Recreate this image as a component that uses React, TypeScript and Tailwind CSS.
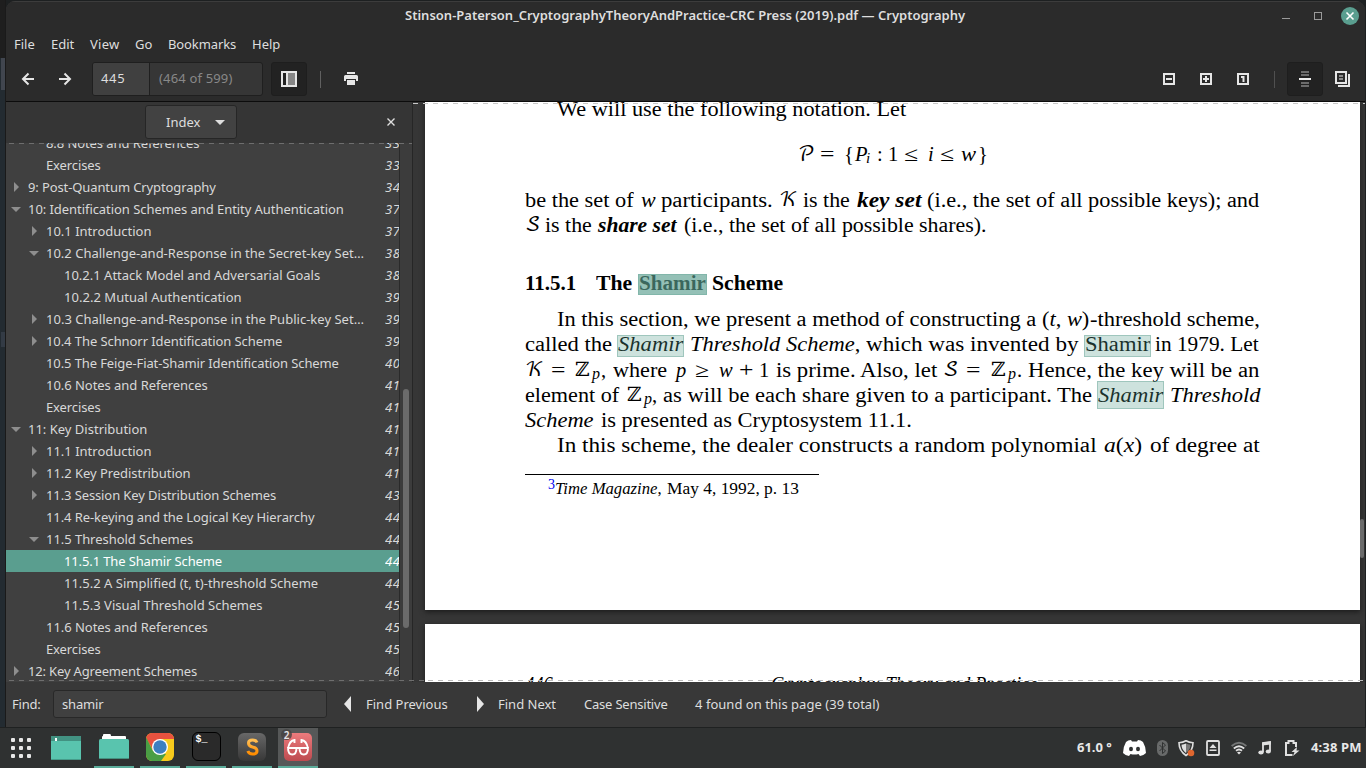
import { useLayoutEffect, useRef, useState, type ReactNode } from "react";

/* Text set to the width of its own box, by tracking (UI) or by horizontal scale (document). */
function Fit({ c = "", s = false, children }: { c?: string; s?: boolean; children: ReactNode }) {
  const box = useRef<HTMLSpanElement>(null);
  const inner = useRef<HTMLSpanElement>(null);
  const [style, setStyle] = useState<Record<string, string>>({});
  useLayoutEffect(() => {
    if (!box.current || !inner.current) return;
    const target = box.current.clientWidth;
    const natural = inner.current.offsetWidth;
    const n = (inner.current.textContent || "").length;
    if (!natural || !target) return;
    setStyle(s ? { transform: `scaleX(${target / natural})` } : n > 1 ? { letterSpacing: `${(target - natural) / n}px` } : {});
  }, [s]);
  return (
    <span ref={box} className={`inline-block shrink-0 whitespace-pre ${c}`}>
      <span ref={inner} className="inline-block origin-left" style={style}>{children}</span>
    </span>
  );
}

const T = ({ c = "", children }: { c?: string; children: ReactNode }) => <Fit s c={c}>{children}</Fit>;

const Line = ({ c = "", children }: { c?: string; children: ReactNode }) => (
  <div className={`flex h-[25px] shrink-0 text-[20.5px] leading-[25px] ${c}`}>{children}</div>
);

const M = ({ c = "", children }: { c?: string; children: ReactNode }) => (
  <span className={`inline-block shrink-0 whitespace-pre ${c}`}>{children}</span>
);

const Cal = ({ c = "", children }: { c?: string; children: ReactNode }) => (
  <span className={`inline-block shrink-0 font-['DejaVu_Math_TeX_Gyre','Liberation_Serif',serif] text-[20px] ${c}`}>{children}</span>
);

function Hit({ c = "", o = "", children }: { c?: string; o?: string; children: ReactNode }) {
  return (
    <span className={`relative inline-block shrink-0 ${c}`}>
      <T c="w-full">{children}</T>
      <span className={`absolute -left-px -right-px border ${o}`} />
    </span>
  );
}
const soft = "border-[#5a9e8f]/40 bg-[#5a9e8f]/30";

const rows: [number, string, string, string, string][] = [
  [1, "", "8.8 Notes and References", "w-[153px]", "33"],
  [1, "", "Exercises", "w-[55px]", "33"],
  [0, "c", "9: Post-Quantum Cryptography", "w-[188px]", "34"],
  [0, "o", "10: Identification Schemes and Entity Authentication", "w-[316px]", "37"],
  [1, "c", "10.1 Introduction", "w-[106px]", "37"],
  [1, "o", "10.2 Challenge-and-Response in the Secret-key Set…", "w-[318px]", "38"],
  [2, "", "10.2.1 Attack Model and Adversarial Goals", "w-[256px]", "38"],
  [2, "", "10.2.2 Mutual Authentication", "w-[178px]", "39"],
  [1, "c", "10.3 Challenge-and-Response in the Public-key Set…", "w-[318px]", "39"],
  [1, "c", "10.4 The Schnorr Identification Scheme", "w-[236px]", "39"],
  [1, "", "10.5 The Feige-Fiat-Shamir Identification Scheme", "w-[293px]", "40"],
  [1, "", "10.6 Notes and References", "w-[162px]", "41"],
  [1, "", "Exercises", "w-[55px]", "41"],
  [0, "o", "11: Key Distribution", "w-[119px]", "41"],
  [1, "c", "11.1 Introduction", "w-[106px]", "41"],
  [1, "c", "11.2 Key Predistribution", "w-[145px]", "41"],
  [1, "c", "11.3 Session Key Distribution Schemes", "w-[230px]", "43"],
  [1, "", "11.4 Re-keying and the Logical Key Hierarchy", "w-[268px]", "44"],
  [1, "o", "11.5 Threshold Schemes", "w-[147px]", "44"],
  [2, "", "11.5.1 The Shamir Scheme", "w-[158px]", "44"],
  [2, "", "11.5.2 A Simplified (t, t)-threshold Scheme", "w-[254px]", "44"],
  [2, "", "11.5.3 Visual Threshold Schemes", "w-[199px]", "45"],
  [1, "", "11.6 Notes and References", "w-[162px]", "45"],
  [1, "", "Exercises", "w-[55px]", "45"],
  [0, "c", "12: Key Agreement Schemes", "w-[169px]", "46"],
];
const pads = ["pl-[4px]", "pl-[22px]", "pl-[40px]"];

function Row({ row }: { row: (typeof rows)[number] }) {
  const [level, arrow, text, width, page] = row;
  const sel = text.startsWith("11.5.1");
  return (
    <div className={`flex h-[22px] shrink-0 items-center leading-[22px] ${pads[level]} ${sel ? "bg-[#5a9e8f] text-white" : "text-[#d8d8d8]"}`}>
      <svg className="mr-[6px] h-3 w-3 shrink-0 fill-[#8e8e8e]" viewBox="0 0 12 12">
        {arrow === "c" && <path d="M4 1l5 5-5 5z" />}
        {arrow === "o" && <path d="M1 4h10L6 9z" />}
      </svg>
      <Fit c={width}>{text}</Fit>
      <span className="ml-auto w-[14px] shrink-0 overflow-hidden italic">
        <Fit c="w-[15px]">{page}</Fit>
      </span>
    </div>
  );
}

const Dash = ({ c }: { c: string }) => (
  <div className={`pointer-events-none absolute h-px ${c}`} />
);

function Header() {
  return (
    <div className="flex h-[100px] shrink-0 flex-col border-t border-[#3c3c3c] bg-[#2b2b2b]">
      <div className="flex h-7 items-center">
        <Fit c="ml-[399px] w-[560px] font-semibold text-[#dedede]">Stinson-Paterson_CryptographyTheoryAndPractice-CRC Press (2019).pdf — Cryptography</Fit>
        <svg className="ml-[314px] h-5 w-20" viewBox="1279 5 80 20">
          <path d="M1282 17.500h8" stroke="#9a9a9a" />
          <rect x="1314.500" y="11.500" width="7" height="7" fill="none" stroke="#9a9a9a" />
          <circle cx="1350" cy="15" r="9" fill="#5a9e8f" />
          <path d="M1346.500 11.500l7 7m0-7l-7 7" stroke="#fff" strokeWidth="1.600" />
        </svg>
      </div>
      <div className="flex h-[28px] items-center pl-2 leading-[28px] text-[#dedede]">
        <Fit c="mr-4 w-[21px]">File</Fit>
        <Fit c="mr-4 w-[23px]">Edit</Fit>
        <Fit c="mr-4 w-[29px]">View</Fit>
        <Fit c="mr-4 w-[17px]">Go</Fit>
        <Fit c="mr-4 w-[68px]">Bookmarks</Fit>
        <Fit c="w-[28px]">Help</Fit>
      </div>
      <div className="mt-[4px] flex h-[34px] items-center">
        <svg className="ml-[15px] h-4 w-14" viewBox="0 0 56 16" fill="none" stroke="#e6e6e6" strokeWidth="2">
          <path d="M13 8H2.500M7.500 2.500L2 8 7.500 13.500M38 8h10.500M43.500 2.500L49 8 43.500 13.500" />
        </svg>
        <div className="ml-[15px] flex h-[34px] w-[171px] items-center overflow-hidden rounded-[3px] border border-[#1f1f1f] bg-[#363636] leading-[30px]">
          <span className="h-full w-[57px] border-r border-[#1f1f1f] bg-[#404040] pl-2 text-[#dedede]"><Fit c="w-[24px]">445</Fit></span>
          <span className="h-full pl-[9px] text-[#888]"><Fit c="w-[74px]">(464 of 599)</Fit></span>
        </div>
        <div className="ml-2 flex h-[34px] w-9 items-center justify-center rounded-[3px] border border-[#1e1e1e] bg-[#222]">
          <svg className="h-4 w-4" viewBox="0 0 16 16">
            <path fill="#e6e6e6" fillRule="evenodd" d="M0 0h16v16H0zM2 2v12h3V2zM6 2v12h8V2z" />
            <rect x="7" y="2" width="7" height="12" fill="#868686" />
            <rect x="5" y="2" width="2" height="12" fill="#e6e6e6" />
          </svg>
        </div>
        <div className="ml-[13px] h-[17px] w-px bg-[#606060]" />
        <svg className="ml-[23px] h-[14px] w-[14px]" viewBox="0 0 14 14" fill="#e6e6e6">
          <path d="M3 0h8v2H3zM1.500 3h11Q14 3 14 4.500V9h-2V7H2v2H0V4.500Q0 3 1.500 3zM3 8h8v5H3z" />
        </svg>
        <svg className="ml-[805px] h-3 w-[87px]" viewBox="0 0 87 12" fill="none" stroke="#e6e6e6" strokeWidth="2">
          <path d="M1 1h10v10H1zM3 6h6M38 1h10v10H38zM40 6h6M43 3v6M75 1h10v10H75zM78 4h2.500M80.500 3v6" />
        </svg>
        <div className="ml-[24px] h-[17px] w-px bg-[#505050]" />
        <div className="ml-3 flex h-[34px] w-9 items-center justify-center rounded-[3px] border border-[#1e1e1e] bg-[#222]">
          <svg className="h-4 w-3" viewBox="0 0 12 16">
            <path d="M2 1h8M2 4h8M2 12h8M2 15h8" stroke="#6c6c6c" strokeWidth="2" />
            <path d="M0 8h12" stroke="#eee" strokeWidth="2" />
          </svg>
        </div>
        <svg className="ml-3 h-4 w-4" viewBox="0 0 16 16" fill="none">
          <path d="M1 1h10v11H1zM14 3v12H3" stroke="#e6e6e6" strokeWidth="2" />
          <path d="M4 5h4M4 8h4" stroke="#8a8a8a" strokeWidth="1.800" />
        </svg>
      </div>
    </div>
  );
}

function Sidebar() {
  return (
    <div className="flex w-[407px] shrink-0 flex-col border-r border-[#262626]">
      <div className="flex h-[41px] shrink-0 items-center bg-[#353535]">
        <div className="ml-[139px] -mt-px flex h-[34px] w-[92px] items-center rounded-[3px] border border-[#262626] bg-[#424242] leading-8 text-[#dedede]">
          <Fit c="ml-5 w-[34px]">Index</Fit>
          <svg className="ml-[15px] h-[5px] w-[10px] fill-[#dedede]" viewBox="0 0 10 5"><path d="M0 0h10L5 5z" /></svg>
        </div>
        <svg className="ml-[150px] -mt-px h-2 w-2" viewBox="0 0 8 8"><path d="M.5.5l7 7m0-7l-7 7" stroke="#dedede" strokeWidth="1.400" /></svg>
      </div>
      <div className="relative flex min-h-0 flex-1 overflow-hidden bg-[#404040]">
        <div className="-mt-[11px] flex w-[393px] shrink-0 flex-col">
          {rows.map((r, i) => <Row key={i} row={r} />)}
        </div>
        <div className="flex w-[13px] flex-col border-l border-[#2a2a2a] bg-[#3c3c3c] pl-[3px] pt-[246px]">
          <div className="h-[239px] w-[6px] rounded-full bg-[#6b6b6b]" />
        </div>
        <Dash c="inset-x-0 top-0 bg-[repeating-linear-gradient(90deg,transparent_0_3px,#6e6e6e_3px_8px,transparent_8px_10px)]" />
      </div>
    </div>
  );
}

function Pages() {
  return (
    <div className="flex min-w-0 flex-1 flex-col overflow-hidden bg-[#363636] pl-3 font-['Liberation_Serif',serif] text-black">
      <div className="h-[508px] w-[935px] shrink-0 overflow-hidden bg-white pl-[100px] shadow-[0_2px_5px_#1c1c1c]">
        <Line c="-mt-[5px] pl-8"><T c="w-[349px]">We will use the following notation. Let</T></Line>
        <Line c="mt-[20px] pl-[273px]">
          <Cal c="w-[22px]">𝒫</Cal>
          <M c="w-[24px] scale-x-125 origin-left">=</M>
          <M c="w-[11px]">{"{"}</M>
          <M c="w-[11px] italic">P</M>
          <M c="w-[11px] italic text-[15px] pt-1">i</M>
          <M c="w-[11px]">:</M>
          <M c="w-[16px]">1</M>
          <M c="w-[24px] scale-x-125 origin-left">≤</M>
          <M c="w-[12px] italic">i</M>
          <M c="w-[21px] scale-x-125 origin-left">≤</M>
          <M c="w-[17px] italic scale-x-110 origin-left">w</M>
          <M>{"}"}</M>
        </Line>
        <Line c="mt-[21px]">
          <T c="w-[109px] mr-[7px]">be the set of</T>
          <T c="w-[15px] mr-[5px] italic">w</T>
          <T c="w-[112px] mr-[6px]">participants.</T>
          <Cal c="w-[24px]">𝒦</Cal>
          <T c="w-[47px] mr-[7px]">is the</T>
          <T c="w-[64px] mr-[6px] font-bold italic">key set</T>
          <T c="w-[332px]">(i.e., the set of all possible keys); and</T>
        </Line>
        <Line>
          <Cal c="w-[20px]">𝒮</Cal>
          <T c="w-[47px] mr-[6px]">is the</T>
          <T c="w-[79px] mr-[7px] font-bold italic">share set</T>
          <T c="w-[303px]">(i.e., the set of all possible shares).</T>
        </Line>
        <Line c="mt-[33px] font-bold">
          <T c="w-[51px] mr-[20px]">11.5.1</T>
          <T c="w-[36px] mr-[7px]">The</T>
          <Hit c="w-[67px] mr-[6px]" o="top-[3px] h-[21px] border-[#5a9e8f]/30 bg-[#5a9e8f]/65">Shamir</Hit>
          <T c="w-[71px]">Scheme</T>
        </Line>
        <Line c="mt-[11px] pl-8">
          <T c="w-[479px] mr-[6px]">In this section, we present a method of constructing a</T>
          <T c="w-[47px] mr-px">(<i>t</i>, <i>w</i>)</T>
          <T c="w-[170px]">-threshold scheme,</T>
        </Line>
        <Line>
          <T c="w-[87px] mr-[6px]">called the</T>
          <Hit c="w-[65px] mr-[7px] italic" o={`top-[3px] h-[22px] ${soft}`}>Shamir</Hit>
          <T c="w-[170px] mr-[6px]"><i>Threshold Scheme</i>,</T>
          <T c="w-[212px] mr-[7px]">which was invented by</T>
          <Hit c="w-[65px] mr-[5px]" o={`top-[3px] h-[22px] ${soft}`}>Shamir</Hit>
          <T c="w-[104px]">in 1979. Let</T>
        </Line>
        <Line c="mt-px">
          <Cal c="w-[26px]">𝒦</Cal>
          <M c="w-[23px] scale-x-125 origin-left">=</M>
          <Cal c="w-[18px]">ℤ</Cal>
          <M c="w-[9px] italic text-[16px] pt-[3px]">p</M>
          <M c="w-[12px]">,</M>
          <T c="w-[54px] mr-[9px]">where</T>
          <M c="w-[19px] italic">p</M>
          <M c="w-[24px] scale-x-125 origin-left">≥</M>
          <M c="w-[20px] italic">w</M>
          <M c="w-[20px] scale-x-125 origin-left">+</M>
          <M c="w-[17px]">1</M>
          <T c="w-[161px] mr-[6px]">is prime. Also, let</T>
          <Cal c="w-[23px]">𝒮</Cal>
          <M c="w-[24px] scale-x-125 origin-left">=</M>
          <Cal c="w-[18px]">ℤ</Cal>
          <M c="w-[9px] italic text-[16px] pt-[3px]">p</M>
          <M c="w-[11px]">.</M>
          <T c="w-[231px]">Hence, the key will be an</T>
        </Line>
        <Line>
          <T c="w-[94px] mr-[7px]">element of</T>
          <Cal c="w-[18px]">ℤ</Cal>
          <M c="w-[8px] italic text-[16px] pt-[3px]">p</M>
          <M c="w-[11px]">,</M>
          <T c="w-[429px] mr-[6px]">as will be each share given to a participant. The</T>
          <Hit c="w-[65px] mr-[7px] italic" o={`-top-[2px] h-[28px] ${soft}`}>Shamir</Hit>
          <T c="w-[90px] italic">Threshold</T>
        </Line>
        <Line>
          <T c="w-[69px] mr-[7px] italic">Scheme</T>
          <T c="w-[311px]">is presented as Cryptosystem 11.1.</T>
        </Line>
        <Line c="pl-8">
          <T c="w-[540px] mr-[7px]">In this scheme, the dealer constructs a random polynomial</T>
          <T c="w-[38px] mr-[8px]"><i>a</i>(<i>x</i>)</T>
          <T c="w-[110px]">of degree at</T>
        </Line>
        <div className="mt-[16px] h-px w-[294px] bg-black" />
        <div className="mt-1 flex h-5 pl-[23px] text-[17px] leading-5">
          <span className="w-[7px] -mt-[4px] text-[14px] text-[#0000ee]">3</span>
          <T c="w-[107px] mr-[5px]"><i>Time Magazine</i>,</T>
          <T c="w-[132px]">May 4, 1992, p. 13</T>
        </div>
      </div>
      <div className="mt-[14px] flex h-[200px] w-[935px] shrink-0 bg-white pl-[100px] pt-[48px] text-[20.5px] italic leading-[25px] shadow-[0_2px_5px_#1c1c1c]">
        <T c="w-[28px] mr-[218px]">446</T>
        <T c="w-[267px]">Cryptography: Theory and Practice</T>
      </div>
    </div>
  );
}

function FindBar() {
  return (
    <div className="flex h-[45px] shrink-0 items-center bg-[#383838] pb-px pl-[6px] leading-[26px] text-[#dedede]">
      <Fit c="w-[29px]">Find:</Fit>
      <div className="ml-3 flex h-[28px] w-[274px] items-center rounded-[3px] border border-[#282828] bg-[#404040] pl-2">
        <Fit c="w-[41px]">shamir</Fit>
      </div>
      <svg className="ml-[17px] h-4 w-[7px] fill-[#e6e6e6]" viewBox="0 0 7 16"><path d="M7 0v16L0 8z" /></svg>
      <Fit c="ml-[15px] w-[82px]">Find Previous</Fit>
      <svg className="ml-[29px] h-4 w-[7px] fill-[#e6e6e6]" viewBox="0 0 7 16"><path d="M0 0l7 8-7 8z" /></svg>
      <Fit c="ml-[14px] w-[58px]">Find Next</Fit>
      <Fit c="ml-[28px] w-[84px]">Case Sensitive</Fit>
      <Fit c="ml-[27px] w-[185px]">4 found on this page (39 total)</Fit>
    </div>
  );
}

function Slot({ active = false, children }: { active?: boolean; children: ReactNode }) {
  return (
    <div className={`mr-[6px] flex h-10 w-10 shrink-0 flex-col items-center border-b-2 border-[#5bac9a] pt-1 ${active ? "relative bg-[#565858]" : ""}`}>
      {children}
    </div>
  );
}

function Taskbar() {
  return (
    <div className="flex h-10 shrink-0 items-center bg-[#2f3131] text-[#e8e8e8]">
      <svg className="ml-[11px] h-5 w-5 shrink-0" viewBox="0 0 20 20" fill="#e8e8e8">
        {[0, 8, 16].map((x) => [0, 8, 16].map((y) => <rect key={`${x}-${y}`} x={x} y={y} width="4" height="4" rx="1" />))}
      </svg>
      <svg className="ml-5 h-6 w-[30px] shrink-0" viewBox="0 0 30 24">
        <rect width="30" height="24" fill="#59c4ae" /><rect width="30" height="5" fill="#429282" /><rect x="4" y="2" width="2" height="3" fill="#fff" />
        <path d="M0 23.500h30" stroke="#469c8a" />
      </svg>
      <div className="ml-[13px] flex">
        <Slot>
          <svg className="mt-[2px] h-[26px] w-[30px]" viewBox="0 0 30 26">
            <path d="M3 6V3q0-1 1-1V1q0-1 1-1h6q1 0 1 2h14q1 0 1 1v3z" fill="#fff" />
            <rect y="5" width="30" height="20" rx="1.500" fill="#59c4ae" /><path d="M1 24.500h28" stroke="#45907f" />
          </svg>
        </Slot>
        <Slot>
          <svg className="mt-px h-7 w-7" viewBox="0 0 28 28">
            <defs><clipPath id="ch"><rect width="28" height="28" rx="6" /></clipPath></defs>
            <g clipPath="url(#ch)">
              <rect width="28" height="28" fill="#f7ca1c" />
              <path d="M0 0h28v6H14L7 17 0 5z" fill="#e8523f" />
              <path d="M0 4l7 14 13 3-5 7H0z" fill="#4a9e44" />
            </g>
            <circle cx="14" cy="14" r="8" fill="#fff" /><circle cx="14" cy="14" r="6.700" fill="#3c7fc0" />
          </svg>
        </Slot>
        <Slot>
          <div className="h-[29px] w-[29px] rounded-[6px] border border-black bg-[#2a2a2a] pl-[3px] pt-[2px] font-['Liberation_Mono',monospace] text-[10px] font-bold leading-[10px] text-white">$_</div>
        </Slot>
        <Slot>
          <div className="mt-px flex h-7 w-7 items-center justify-center rounded-[6px] bg-gradient-to-b from-[#686868] to-[#383838]">
            <svg className="h-[18px] w-[13px]" viewBox="0 0 13 18" fill="none">
              <defs><linearGradient id="sg" x2="0" y2="1"><stop stopColor="#ffbf55" /><stop offset="1" stopColor="#ff8c00" /></linearGradient></defs>
              <path d="M11 4.500Q10 2 6.500 2 2.500 2 2.500 5T6.500 9q4.500 1 4.500 4t-4.500 3Q3 16 1.800 13" stroke="url(#sg)" strokeWidth="3" />
            </svg>
          </div>
        </Slot>
        <Slot active>
          <svg className="mt-px h-7 w-7" viewBox="0 0 28 28">
            <defs><linearGradient id="rg" x2="0" y2="1"><stop stopColor="#ec7b7d" /><stop offset="1" stopColor="#bd4b50" /></linearGradient></defs>
            <rect width="28" height="28" rx="5" fill="url(#rg)" />
            <g fill="none" stroke="#fff" strokeWidth="1.900">
              <path d="M4 15h8.500q0 6.500-4.200 6.500T4 15zM15.500 15H24q0 6.500-4.200 6.500T15.500 15zM12 16q2-2 4 0M4 15.500Q5.500 7.500 10.500 7v3M24 15.500Q22.500 7.500 17.500 7v3" />
            </g>
          </svg>
          <span className="absolute left-[3px] top-px flex h-[11px] w-[11px] items-center justify-center rounded-full bg-[#444]/80 text-[10px] font-semibold leading-none">2</span>
        </Slot>
      </div>
      <Fit c="ml-[753px] w-[35px] font-bold">61.0 °</Fit>
      <svg className="ml-[11px] h-[18px] w-[23px] shrink-0" viewBox="0 0 23 18">
        <path fill="#fff" d="M8 1Q5 1 3 3 0 8 0 14q3 3 6 3l1.500-2q4 1 8 0L17 17q3 0 6-3 0-6-3-11-2-2-5-2l-1 1.500H9z" />
        <ellipse cx="8" cy="10" rx="2" ry="2.200" fill="#303232" /><ellipse cx="15" cy="10" rx="2" ry="2.200" fill="#303232" />
      </svg>
      <svg className="ml-[11px] h-4 w-[11px] shrink-0" viewBox="0 0 11 16">
        <rect width="11" height="16" rx="5.500" fill="#686a6a" />
        <path d="M2.500 5l6 6-3 2.500v-11l3 2.500-6 6" fill="none" stroke="#303232" />
      </svg>
      <svg className="ml-[10px] h-[17px] w-[17px] shrink-0" viewBox="0 0 17 17">
        <path d="M8 .8Q11 2.500 15 2.800 15 11 8 15.500 1 11 1 2.800 5 2.500 8 .8z" fill="none" stroke="#dedede" strokeWidth="1.600" />
        <path d="M8 3.500v9.500Q3.500 10 3.500 4.800 6 4.600 8 3.500z" fill="#dedede" />
        <path d="M8 3.500v9.500Q12.500 10 12.500 4.800 10 4.600 8 3.500z" fill="#777" />
        <circle cx="13" cy="13" r="3.300" fill="#e0672f" />
      </svg>
      <svg className="ml-[11px] h-4 w-[14px] shrink-0" viewBox="0 0 14 16">
        <rect x="1" y="1" width="12" height="14" rx="1" fill="none" stroke="#e0e0e0" strokeWidth="1.800" />
        <path d="M7 4l3.500 4h-7zM3.500 9.500h7V11h-7z" fill="#e0e0e0" />
      </svg>
      <svg className="ml-[11px] h-[14px] w-4 shrink-0" viewBox="0 0 16 14" fill="none" strokeWidth="1.800">
        <path d="M.6 5Q8-1.500 15.400 5" stroke="#747676" />
        <path d="M2.800 7.500q5.200-4.500 10.400 0M5 9.800q3-2.600 6 0" stroke="#e0e0e0" />
        <path d="M8 13.500l-2-2q2-1.500 4 0z" fill="#e0e0e0" />
      </svg>
      <svg className="ml-[11px] h-[14px] w-[14px] shrink-0" viewBox="0 0 14 14">
        <path d="M5 11V2l7-1v9" fill="none" stroke="#e0e0e0" strokeWidth="1.800" />
        <path d="M4.200 1.500L12.900.5v3l-8.700 1z" fill="#e0e0e0" />
        <ellipse cx="3" cy="11.500" rx="2.700" ry="2" fill="#e0e0e0" /><ellipse cx="10.300" cy="10.500" rx="2.600" ry="2" fill="#e0e0e0" />
      </svg>
      <svg className="ml-[13px] h-4 w-[15px] shrink-0" viewBox="0 0 15 16">
        <path d="M7.500 15H1V3h2.500V1h5v2H11v4" fill="none" stroke="#e0e0e0" strokeWidth="2" />
        <path d="M12 7L6.500 12h3L8 16l6.500-5.500H11.500z" fill="#e0e0e0" />
      </svg>
      <Fit c="ml-[11px] w-[51px] font-bold">4:38 PM</Fit>
    </div>
  );
}

export default function App() {
  return (
    <div className="flex h-[768px] w-[1366px] flex-col overflow-hidden bg-[#1d2021] font-['Noto_Sans','Open_Sans',sans-serif] text-[13px]">
      <div className="flex h-[727px] shrink-0">
        <div className="flex w-[6px] shrink-0 flex-col border-r border-[#1a1a1a] bg-[#232b31] pl-px">
          <div className="-ml-px h-[58px] bg-[#1e1e1e]" />
          <div className="h-8 bg-[#41464f]" />
          <div className="mt-[242px] h-[15px] bg-[#333b45]" />
        </div>
        <div className="relative mt-px flex w-[1359px] flex-col overflow-hidden rounded-t-[9px] bg-[#363636]">
          <Header />
          <div className="h-px shrink-0 bg-[#0c0c0c]" />
          <div className="flex h-[580px] shrink-0">
            <Sidebar />
            <Pages />
            <div className="-ml-[5px] flex w-[5px] flex-col pt-[417px]">
              <div className="h-[39px] w-[4px] rounded-full bg-[#6b6b6b]" />
            </div>
          </div>
          <FindBar />
          <Dash c="left-[407px] right-0 top-[102px] bg-[repeating-linear-gradient(90deg,#c8c8c8_0_5px,transparent_5px_10px)]" />
          <Dash c="left-0 w-[419px] bottom-[46px] bg-[repeating-linear-gradient(90deg,transparent_0_3px,#6e6e6e_3px_8px,transparent_8px_10px)]" />
          <Dash c="left-[419px] right-0 bottom-[46px] bg-[repeating-linear-gradient(90deg,transparent_0_3px,#bbb_3px_8px,transparent_8px_10px)]" />
        </div>
      </div>
      <div className="h-px shrink-0 bg-[#1f2121]" />
      <Taskbar />
    </div>
  );
}
